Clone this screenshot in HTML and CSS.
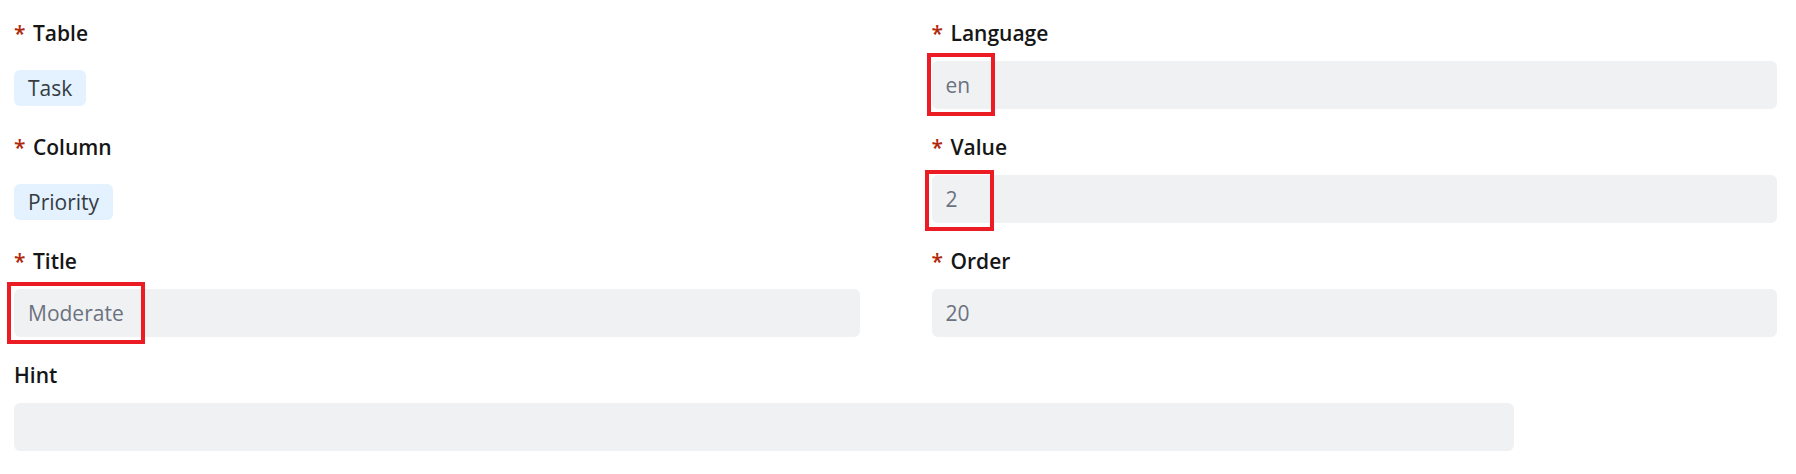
FILE: index.html
```html
<!DOCTYPE html>
<html lang="en">
<head>
    <meta charset="UTF-8">
    <meta name="viewport" content="width=device-width, initial-scale=1.0">
    <title>Edit Option</title>
    <link rel="stylesheet" href="styles.css">
</head>
<body>
    <form class="option-form">
        <div class="field">
            <label class="field-label"><span class="req">*</span> Table</label>
            <div class="field-body">
                <span class="tag">Task</span>
            </div>
        </div>
        <div class="field">
            <label class="field-label"><span class="req">*</span> Language</label>
            <div class="field-body">
                <input class="text-input" type="text" value="en">
                <span class="highlight hl-language"></span>
            </div>
        </div>
        <div class="field">
            <label class="field-label"><span class="req">*</span> Column</label>
            <div class="field-body">
                <span class="tag">Priority</span>
            </div>
        </div>
        <div class="field">
            <label class="field-label"><span class="req">*</span> Value</label>
            <div class="field-body">
                <input class="text-input" type="text" value="2">
                <span class="highlight hl-value"></span>
            </div>
        </div>
        <div class="field">
            <label class="field-label"><span class="req">*</span> Title</label>
            <div class="field-body">
                <input class="text-input" type="text" value="Moderate">
                <span class="highlight hl-title"></span>
            </div>
        </div>
        <div class="field">
            <label class="field-label"><span class="req">*</span> Order</label>
            <div class="field-body">
                <input class="text-input" type="text" value="20">
            </div>
        </div>
        <div class="field field-wide">
            <label class="field-label">Hint</label>
            <div class="field-body">
                <input class="text-input" type="text" value="">
            </div>
        </div>
    </form>
</body>
</html>
```

FILE: styles.css
```css
body {
    margin: 0;
    padding: 18px 19px 0 14px;
    font-family: "Open Sans", "Noto Sans", sans-serif;
    background: #ffffff;
    color: #1b1b1b;
}

.option-form {
    display: grid;
    grid-template-columns: 1fr 1fr;
    column-gap: 72px;
    row-gap: 23px;
}

.field {
    display: flex;
    flex-direction: column;
    gap: 13px;
}

.field-wide {
    grid-column: 1 / -1;
    max-width: 1500px;
}

.field-label {
    font-size: 21px;
    line-height: 30px;
    font-weight: 600;
    color: #161616;
}

.req {
    color: #b0290c;
    margin-right: 2px;
}

.field-body {
    position: relative;
    height: 48px;
    display: flex;
    align-items: center;
}

.tag {
    display: inline-block;
    height: 36px;
    line-height: 36px;
    margin-top: 6px;
    padding: 0 14px;
    font-size: 21px;
    color: #363b42;
    background-color: #e3f2fe;
    border-radius: 6px;
}

.text-input {
    box-sizing: border-box;
    width: 100%;
    height: 48px;
    padding: 0 14px;
    font-family: inherit;
    font-size: 21px;
    color: #6b7280;
    background-color: #f0f1f3;
    border: none;
    border-radius: 6px;
    outline: none;
}

/* red annotation boxes drawn over the inputs */
.highlight {
    position: absolute;
    border: 4px solid #ec1c24;
    pointer-events: none;
}

.hl-title {
    left: -7px;
    top: -7px;
    width: 130px;
    height: 54px;
}

.hl-language {
    left: -5px;
    top: -8px;
    width: 60px;
    height: 55px;
}

.hl-value {
    left: -7px;
    top: -5px;
    width: 61px;
    height: 53px;
}
```
